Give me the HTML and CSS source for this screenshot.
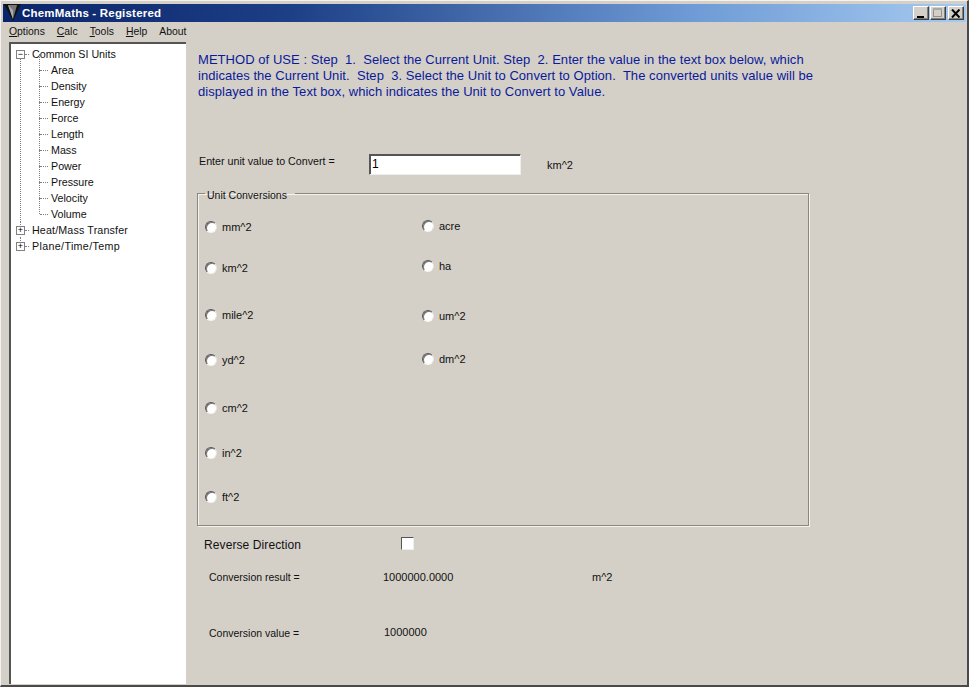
FILE: index.html
```html
<!DOCTYPE html>
<html lang="en">
<head>
<meta charset="utf-8">
<title>ChemMaths - Registered</title>
<link rel="stylesheet" href="styles.css">
</head>
<body>
<div class="window">
  <header class="titlebar">
    <svg class="logo" width="17" height="17" viewBox="0 0 17 17"><path d="M0 0H17L9 17Z" fill="#111"/><path d="M4 1H13L9 15Z" fill="#777"/><path d="M4 1L9 15V6Z" fill="#aaa"/></svg>
    <span class="title">ChemMaths - Registered</span>
    <div class="controls">
      <button class="ctl ctl-min" aria-label="Minimize"><svg width="9" height="9" viewBox="0 0 9 9"><rect x="0" y="7" width="7" height="2" fill="#000"/></svg></button>
      <button class="ctl ctl-max" aria-label="Maximize"><svg width="10" height="10" viewBox="0 0 10 10"><rect x="0.5" y="0.5" width="8" height="8" fill="none" stroke="#8f8f8f"/><rect x="0" y="0" width="9" height="2" fill="#a8a8a8"/></svg></button>
      <button class="ctl ctl-close" aria-label="Close"><svg width="10" height="9" viewBox="0 0 10 9"><path d="M1 0.5L8.5 8.5M8.5 0.5L1 8.5" stroke="#000" stroke-width="2"/></svg></button>
    </div>
  </header>
  <nav class="menubar">
    <span class="menu"><u>O</u>ptions</span>
    <span class="menu"><u>C</u>alc</span>
    <span class="menu"><u>T</u>ools</span>
    <span class="menu"><u>H</u>elp</span>
    <span class="menu">About</span>
  </nav>
  <div class="body">
    <aside class="tree">
      <div class="node node-open"><span class="box">&#8722;</span><span class="hdash"></span><span>Common SI Units</span></div>
      <ul class="children">
        <li>Area</li><li>Density</li><li>Energy</li><li>Force</li><li>Length</li><li>Mass</li><li>Power</li><li>Pressure</li><li>Velocity</li><li>Volume</li>
      </ul>
      <div class="node node-mid"><span class="box">+</span><span class="hdash"></span><span>Heat/Mass Transfer</span></div>
      <div class="node node-last"><span class="box">+</span><span class="hdash"></span><span>Plane/Time/Temp</span></div>
    </aside>
    <main class="panel">
      <div class="method">
        <div>METHOD of USE : Step&nbsp; 1.&nbsp; Select the Current Unit. Step&nbsp; 2. Enter the value in the text box below, which</div>
        <div>indicates the Current Unit.&nbsp; Step&nbsp; 3. Select the Unit to Convert to Option.&nbsp; The converted units value will be</div>
        <div>displayed in the Text box, which indicates the Unit to Convert to Value.</div>
      </div>
      <div class="enter-row">
        <span class="enter-label">Enter unit value to Convert =</span>
        <input class="value-input" type="text" value="1">
        <span class="enter-unit">km^2</span>
      </div>
      <fieldset class="group">
        <legend>Unit Conversions</legend>
        <div class="col col-left">
          <label class="opt"><span class="radio"></span>mm^2</label>
          <label class="opt"><span class="radio"></span>km^2</label>
          <label class="opt"><span class="radio"></span>mile^2</label>
          <label class="opt"><span class="radio"></span>yd^2</label>
          <label class="opt"><span class="radio"></span>cm^2</label>
          <label class="opt"><span class="radio"></span>in^2</label>
          <label class="opt"><span class="radio"></span>ft^2</label>
        </div>
        <div class="col col-right">
          <label class="opt"><span class="radio"></span>acre</label>
          <label class="opt"><span class="radio"></span>ha</label>
          <label class="opt"><span class="radio"></span>um^2</label>
          <label class="opt"><span class="radio"></span>dm^2</label>
        </div>
      </fieldset>
      <div class="reverse-row">
        <span class="reverse-label">Reverse Direction</span>
        <span class="check"></span>
      </div>
      <div class="result-row">
        <span class="result-label">Conversion result =</span>
        <span class="result-value">1000000.0000</span>
        <span>m^2</span>
      </div>
      <div class="result-row result-row-2">
        <span class="result-label">Conversion value =</span>
        <span class="result-value result-value-2">1000000</span>
      </div>
    </main>
  </div>
</div>
</body>
</html>
```
FILE: styles.css
```css
* { box-sizing: border-box; }
html, body { margin: 0; padding: 0; }
body {
  width: 969px;
  height: 687px;
  overflow: hidden;
  background: #d4d0c8;
  font-family: "Liberation Sans", Arial, sans-serif;
  font-size: 11px;
  color: #111;
}
.window {
  width: 969px;
  height: 687px;
  display: flex;
  flex-direction: column;
  background: #d4d0c8;
  border-top: 1px solid #f4f3ef;
  border-left: 1px solid #f4f3ef;
  border-right: 2px solid #4a4a4a;
  border-bottom: 2px solid #4a4a4a;
  padding: 3px 1px 0 2px;
}
.titlebar {
  flex: none;
  height: 18px;
  display: flex;
  align-items: center;
  background: linear-gradient(90deg, #0a246a 0%, #1d3f86 30%, #6f9cd6 72%, #a6caf0 100%);
  color: #fff;
  font-weight: bold;
  font-size: 11.5px;
}
.logo { flex: none; margin-left: 1px; margin-top: -1px; }
.title { margin-left: 1px; margin-top: -1px; letter-spacing: 0.2px; }
.controls { margin-left: auto; margin-right: 2px; display: flex; gap: 1px; }
.ctl {
  width: 16px;
  height: 14px;
  padding: 0;
  display: flex;
  align-items: center;
  justify-content: center;
  background: #d4d0c8;
  border: 1px solid;
  border-color: #fff #404040 #404040 #fff;
  box-shadow: inset -1px -1px 0 #808080;
}
.ctl-close { margin-left: 1px; }
.menubar {
  flex: none;
  height: 19px;
  display: flex;
  align-items: center;
  padding-left: 6px;
  gap: 12px;
  font-size: 10.4px;
}
.body { flex: 1; display: flex; min-height: 0; padding-left: 6px; padding-top: 1px; padding-bottom: 1px; }
.tree {
  position: relative;
  flex: none;
  width: 177px;
  background: #fff;
  border-top: 2px solid #555;
  border-left: 2px solid #555;
  padding-top: 2px;
  font-size: 10.7px;
}
.node {
  position: relative;
  height: 16px;
  display: flex;
  align-items: center;
  padding-left: 5px;
  white-space: nowrap;
}
.box {
  flex: none;
  width: 9px;
  height: 9px;
  border: 1px solid #808080;
  background: #fff;
  font-size: 9px;
  line-height: 7px;
  text-align: center;
  color: #000;
  position: relative;
  z-index: 1;
}
.hdash { flex: none; width: 4px; border-top: 1px dotted #808080; margin-right: 3px; }
.node-mid { letter-spacing: 0.15px; }
.node-last { letter-spacing: 0.35px; }
.node-mid::before, .node-last::before {
  content: "";
  position: absolute;
  left: 9px;
  top: -1px;
  height: 6px;
  border-left: 1px dotted #808080;
}
.children {
  list-style: none;
  margin: 0;
  padding: 0;
  position: relative;
}
.children::before {
  content: "";
  position: absolute;
  left: 9px;
  top: -3px;
  bottom: 0;
  border-left: 1px dotted #808080;
}
.children li {
  position: relative;
  height: 16px;
  line-height: 16px;
  padding-left: 40px;
}
.children li::before {
  content: "";
  position: absolute;
  left: 28px;
  top: -8px;
  height: 16px;
  border-left: 1px dotted #808080;
}
.children li::after {
  content: "";
  position: absolute;
  left: 29px;
  top: 8px;
  width: 8px;
  border-top: 1px dotted #808080;
}
.panel {
  flex: 1;
  min-width: 0;
  padding-left: 12px;
  position: relative;
}
.method {
  color: #0a1a9a;
  font-size: 13px;
  letter-spacing: 0.05px;
  line-height: 16px;
  padding-top: 10px;
  white-space: nowrap;
  height: 112px;
}
.enter-row {
  height: 20px;
  display: flex;
  align-items: center;
}
.enter-label { width: 171px; padding-left: 1px; margin-top: -6px; font-size: 10.7px; }
.value-input {
  width: 152px;
  height: 21px;
  padding: 0 0 0 2px;
  margin: 0;
  font: 12px "Liberation Sans", Arial, sans-serif;
  color: #000;
  background: #fff;
  border: 1px solid;
  border-color: #555 #eee #eee #555;
  box-shadow: inset 1px 1px 0 #555;
  outline: none;
}
.enter-unit { margin-left: 26px; margin-top: 1px; }
.group {
  margin: 13px 0 0 -1px;
  width: 612px;
  height: 339px;
  padding: 0;
  border: 1px solid #8a877f;
  box-shadow: 1px 1px 0 #f5f3ee, inset 1px 1px 0 #f5f3ee;
  position: relative;
  display: flex;
}
.group legend {
  margin-left: 7px;
  padding: 0 8px 0 2px;
  font-size: 10.5px;
  line-height: 13px;
  position: relative;
  top: 2px;
}
.col { display: flex; flex-direction: column; }
.col-left { width: 224px; padding-left: 7px; padding-top: 20px; }
.col-right { padding-top: 19px; }
.opt { display: flex; align-items: center; height: 14px; gap: 5px; }
.col-left .opt:nth-child(2) { margin-top: 27px; }
.col-left .opt:nth-child(3) { margin-top: 33px; }
.col-left .opt:nth-child(4) { margin-top: 31px; }
.col-left .opt:nth-child(5) { margin-top: 34px; }
.col-left .opt:nth-child(6) { margin-top: 31px; }
.col-left .opt:nth-child(7) { margin-top: 30px; }
.col-right .opt:nth-child(2) { margin-top: 26px; }
.col-right .opt:nth-child(3) { margin-top: 36px; }
.col-right .opt:nth-child(4) { margin-top: 29px; }
.radio {
  flex: none;
  width: 12px;
  height: 12px;
  border-radius: 50%;
  background: #fff;
  border: 1px solid;
  border-color: #555 #e8e6e0 #f4f3ef #555;
  box-shadow: inset 1px 1px 0 #777;
}
.reverse-row {
  height: 14px;
  margin-top: 11px;
  display: flex;
  align-items: center;
  padding-left: 6px;
}
.reverse-label { width: 197px; font-size: 12px; letter-spacing: 0.1px; margin-top: 2px; }
.check {
  width: 13px;
  height: 13px;
  background: #fff;
  border: 1px solid;
  border-color: #555 #eee #eee #555;
  margin-top: -1px;
}
.result-row {
  margin-top: 19px;
  height: 14px;
  display: flex;
  align-items: center;
  padding-left: 11px;
}
.result-row-2 { margin-top: 42px; }
.result-label { width: 174px; font-size: 10.5px; }
.result-value { width: 209px; }
.result-value-2 { margin-left: 1px; margin-top: -3px; }
```
